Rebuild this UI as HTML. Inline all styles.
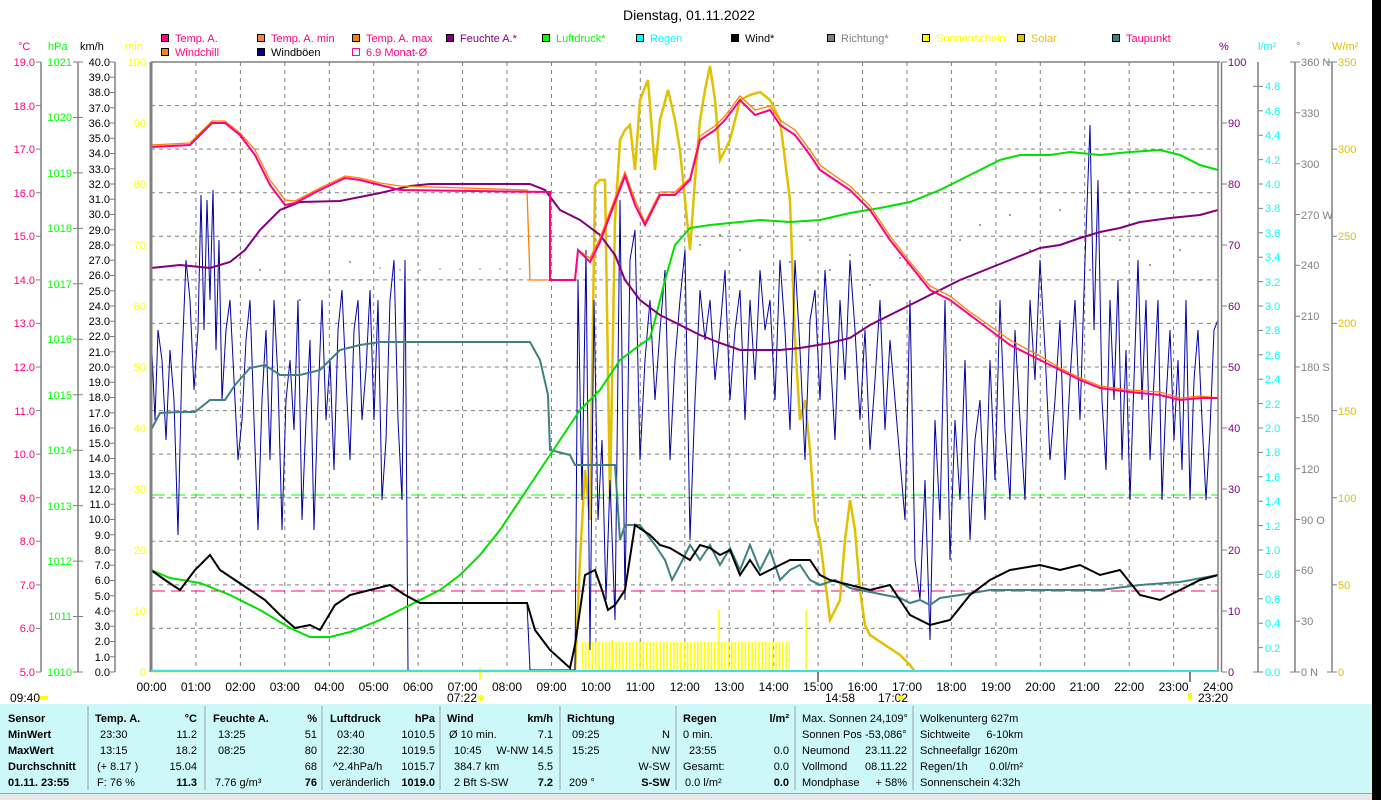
<!DOCTYPE html>
<html><head><meta charset="utf-8"><style>
html,body{margin:0;padding:0;background:#fff;width:1381px;height:800px;overflow:hidden}
svg{display:block;font-family:"Liberation Sans",sans-serif;font-size:11px}
</style></head><body>
<svg width="1381" height="800" viewBox="0 0 1381 800" xmlns="http://www.w3.org/2000/svg">
<defs>
<pattern id="sun" x="0" y="0" width="3.4" height="40" patternUnits="userSpaceOnUse"><rect x="0" y="0" width="1.6" height="40" fill="#ffff00"/></pattern>
</defs>
<rect width="1381" height="800" fill="#fff"/>
<rect x="1372" y="0" width="9" height="800" fill="#000"/>
<text x="689" y="20" text-anchor="middle" font-size="14">Dienstag, 01.11.2022</text>

<g font-size="11">
<rect x="161.5" y="34.5" width="7" height="7" fill="#ff0080" stroke="#000"/><text x="175" y="42" fill="#ff0080">Temp. A.</text>
<rect x="257.5" y="34.5" width="7" height="7" fill="#ff8040" stroke="#000"/><text x="271" y="42" fill="#ff0080">Temp. A. min</text>
<rect x="352.5" y="34.5" width="7" height="7" fill="#ff8000" stroke="#000"/><text x="366" y="42" fill="#ff0080">Temp. A. max</text>
<rect x="446.5" y="34.5" width="7" height="7" fill="#800080" stroke="#000"/><text x="460" y="42" fill="#800080">Feuchte A.*</text>
<rect x="542.5" y="34.5" width="7" height="7" fill="#00ff00" stroke="#000"/><text x="556" y="42" fill="#00ff00">Luftdruck*</text>
<rect x="636.5" y="34.5" width="7" height="7" fill="#00ffff" stroke="#000"/><text x="650" y="42" fill="#00ffff">Regen</text>
<rect x="731.5" y="34.5" width="7" height="7" fill="#000" stroke="#000"/><text x="745" y="42">Wind*</text>
<rect x="827.5" y="34.5" width="7" height="7" fill="#808080" stroke="#000"/><text x="841" y="42" fill="#808080">Richtung*</text>
<rect x="922.5" y="34.5" width="7" height="7" fill="#ffff00" stroke="#000"/><text x="936" y="42" fill="#ffff00">Sonnenschein</text>
<rect x="1017.5" y="34.5" width="7" height="7" fill="#e0c000" stroke="#000"/><text x="1031" y="42" fill="#e0c000">Solar</text>
<rect x="1112.5" y="34.5" width="7" height="7" fill="#408080" stroke="#000"/><text x="1126" y="42" fill="#ff0080">Taupunkt</text>
<rect x="161.5" y="48.5" width="7" height="7" fill="#ff8000" stroke="#000"/><text x="175" y="56" fill="#ff0080">Windchill</text>
<rect x="257.5" y="48.5" width="7" height="7" fill="#000080" stroke="#000"/><text x="271" y="56">Windböen</text>
<path d="M352.5 48.5h7v7" fill="none" stroke="#ff0080"/><path d="M352.5 48.5v7h7" fill="none" stroke="#ff0080"/><text x="366" y="56" fill="#ff0080">6.9 Monat-Ø</text>
</g>

<text x="18" y="50" fill="#ff0080">°C</text>
<text x="48" y="50" fill="#00ff00">hPa</text>
<text x="80" y="50">km/h</text>
<text x="125" y="50" fill="#ffff00">min</text>
<text x="1219" y="50" fill="#800080">%</text>
<text x="1258" y="50" fill="#00ffff">l/m²</text>
<text x="1296" y="50" fill="#808080">°</text>
<text x="1332" y="50" fill="#e0c000">W/m²</text>

<g stroke="#808080" stroke-width="1.5">
<line x1="41" y1="62" x2="41" y2="672"/>
<line x1="78" y1="62" x2="78" y2="672"/>
<line x1="115" y1="62" x2="115" y2="672"/>
<line x1="1258" y1="62" x2="1258" y2="672"/>
<line x1="1295" y1="62" x2="1295" y2="672"/>
<line x1="1332" y1="62" x2="1332" y2="672"/>
</g>
<g fill="#ff0080" text-anchor="end">
<text x="35" y="66">19.0</text><text x="35" y="110">18.0</text><text x="35" y="153">17.0</text><text x="35" y="197">16.0</text><text x="35" y="240">15.0</text><text x="35" y="284">14.0</text><text x="35" y="327">13.0</text><text x="35" y="371">12.0</text><text x="35" y="415">11.0</text><text x="35" y="458">10.0</text><text x="35" y="502">9.0</text><text x="35" y="545">8.0</text><text x="35" y="589">7.0</text><text x="35" y="632">6.0</text><text x="35" y="676">5.0</text>
</g>
<g stroke="#808080"><path d="M36 62h5M36 105.6h5M36 149.1h5M36 192.7h5M36 236.3h5M36 279.9h5M36 323.4h5M36 367h5M36 410.6h5M36 454.1h5M36 497.7h5M36 541.3h5M36 584.9h5M36 628.4h5M36 672h5"/>
<path d="M73 62h10M73 117.5h10M73 172.9h10M73 228.4h10M73 283.8h10M73 339.3h10M73 394.7h10M73 450.2h10M73 505.6h10M73 561.1h10M73 616.5h10M73 672h10"/>
<path d="M110 62h5M110 77.3h5M110 92.5h5M110 107.8h5M110 123h5M110 138.3h5M110 153.5h5M110 168.8h5M110 184h5M110 199.3h5M110 214.5h5M110 229.8h5M110 245h5M110 260.3h5M110 275.5h5M110 290.8h5M110 306h5M110 321.3h5M110 336.5h5M110 351.8h5M110 367h5M110 382.3h5M110 397.5h5M110 412.8h5M110 428h5M110 443.3h5M110 458.5h5M110 473.8h5M110 489h5M110 504.3h5M110 519.5h5M110 534.8h5M110 550h5M110 565.3h5M110 580.5h5M110 595.8h5M110 611h5M110 626.3h5M110 641.5h5M110 656.8h5M110 672h5"/>
<path d="M1222 62h5M1222 123h5M1222 184h5M1222 245h5M1222 306h5M1222 367h5M1222 428h5M1222 489h5M1222 550h5M1222 611h5M1222 672h5"/>
<path d="M1253 86.4h10M1258 110.8h5M1258 135.2h5M1258 159.6h5M1258 184h5M1258 208.4h5M1258 232.8h5M1258 257.2h5M1258 281.6h5M1258 306h5M1258 330.4h5M1258 354.8h5M1258 379.2h5M1258 403.6h5M1258 428h5M1258 452.4h5M1258 476.8h5M1258 501.2h5M1258 525.6h5M1258 550h5M1258 574.4h5M1258 598.8h5M1258 623.2h5M1258 647.6h5M1253 672h10"/>
<path d="M1290 62h10M1295 112.8h5M1295 163.7h5M1295 214.5h5M1295 265.3h5M1295 316.2h5M1295 367h5M1295 417.8h5M1295 468.7h5M1295 519.5h5M1295 570.3h5M1295 621.2h5M1290 672h10"/>
<path d="M1327 62h10M1332 149.1h5M1332 236.3h5M1332 323.4h5M1332 410.6h5M1332 497.7h5M1332 584.9h5M1327 672h10"/>
</g>
<g fill="#00ff00" text-anchor="end">
<text x="72" y="66">1021</text><text x="72" y="121">1020</text><text x="72" y="177">1019</text><text x="72" y="232">1018</text><text x="72" y="288">1017</text><text x="72" y="343">1016</text><text x="72" y="399">1015</text><text x="72" y="454">1014</text><text x="72" y="510">1013</text><text x="72" y="565">1012</text><text x="72" y="620">1011</text><text x="72" y="676">1010</text>
</g>
<g text-anchor="end">
<text x="110" y="66">40.0</text><text x="110" y="81">39.0</text><text x="110" y="96">38.0</text><text x="110" y="112">37.0</text><text x="110" y="127">36.0</text><text x="110" y="142">35.0</text><text x="110" y="157">34.0</text><text x="110" y="173">33.0</text><text x="110" y="188">32.0</text><text x="110" y="203">31.0</text><text x="110" y="218">30.0</text><text x="110" y="234">29.0</text><text x="110" y="249">28.0</text><text x="110" y="264">27.0</text><text x="110" y="279">26.0</text><text x="110" y="295">25.0</text><text x="110" y="310">24.0</text><text x="110" y="325">23.0</text><text x="110" y="340">22.0</text><text x="110" y="356">21.0</text><text x="110" y="371">20.0</text><text x="110" y="386">19.0</text><text x="110" y="401">18.0</text><text x="110" y="417">17.0</text><text x="110" y="432">16.0</text><text x="110" y="447">15.0</text><text x="110" y="462">14.0</text><text x="110" y="478">13.0</text><text x="110" y="493">12.0</text><text x="110" y="508">11.0</text><text x="110" y="523">10.0</text><text x="110" y="539">9.0</text><text x="110" y="554">8.0</text><text x="110" y="569">7.0</text><text x="110" y="584">6.0</text><text x="110" y="600">5.0</text><text x="110" y="615">4.0</text><text x="110" y="630">3.0</text><text x="110" y="645">2.0</text><text x="110" y="661">1.0</text><text x="110" y="676">0.0</text>
</g>
<g fill="#ffff00" text-anchor="end">
<text x="146" y="66">100</text><text x="146" y="127">90</text><text x="146" y="188">80</text><text x="146" y="249">70</text><text x="146" y="310">60</text><text x="146" y="371">50</text><text x="146" y="432">40</text><text x="146" y="493">30</text><text x="146" y="554">20</text><text x="146" y="615">10</text><text x="146" y="676">0</text>
</g>
<g fill="#800080">
<text x="1228" y="66">100</text><text x="1228" y="127">90</text><text x="1228" y="188">80</text><text x="1228" y="249">70</text><text x="1228" y="310">60</text><text x="1228" y="371">50</text><text x="1228" y="432">40</text><text x="1228" y="493">30</text><text x="1228" y="554">20</text><text x="1228" y="615">10</text><text x="1228" y="676">0</text>
</g>
<g fill="#00ffff">
<text x="1265" y="90">4.8</text><text x="1265" y="115">4.6</text><text x="1265" y="139">4.4</text><text x="1265" y="164">4.2</text><text x="1265" y="188">4.0</text><text x="1265" y="212">3.8</text><text x="1265" y="237">3.6</text><text x="1265" y="261">3.4</text><text x="1265" y="286">3.2</text><text x="1265" y="310">3.0</text><text x="1265" y="334">2.8</text><text x="1265" y="359">2.6</text><text x="1265" y="383">2.4</text><text x="1265" y="408">2.2</text><text x="1265" y="432">2.0</text><text x="1265" y="456">1.8</text><text x="1265" y="481">1.6</text><text x="1265" y="505">1.4</text><text x="1265" y="530">1.2</text><text x="1265" y="554">1.0</text><text x="1265" y="578">0.8</text><text x="1265" y="603">0.6</text><text x="1265" y="627">0.4</text><text x="1265" y="652">0.2</text><text x="1265" y="676">0.0</text>
</g>
<g fill="#808080">
<text x="1301" y="66">360 N</text><text x="1301" y="117">330</text><text x="1301" y="168">300</text><text x="1301" y="219">270 W</text><text x="1301" y="269">240</text><text x="1301" y="320">210</text><text x="1301" y="371">180 S</text><text x="1301" y="422">150</text><text x="1301" y="473">120</text><text x="1301" y="524">90  O</text><text x="1301" y="574">60</text><text x="1301" y="625">30</text><text x="1301" y="676">0   N</text>
</g>
<g fill="#e0c000">
<text x="1338" y="66">350</text><text x="1338" y="153">300</text><text x="1338" y="240">250</text><text x="1338" y="327">200</text><text x="1338" y="415">150</text><text x="1338" y="502">100</text><text x="1338" y="589">50</text><text x="1338" y="676">0</text>
</g>

<g stroke="#808080" stroke-dasharray="4,4" stroke-width="1">
<path d="M195.9 62V672M240.4 62V672M284.8 62V672M329.3 62V672M373.7 62V672M418.1 62V672M462.6 62V672M507 62V672M551.5 62V672M595.9 62V672M640.3 62V672M684.8 62V672M729.2 62V672M773.7 62V672M818.1 62V672M862.5 62V672M907 62V672M951.4 62V672M995.9 62V672M1040.3 62V672M1084.7 62V672M1129.2 62V672M1173.6 62V672"/>
<path d="M151 105.6H1218M151 149.1H1218M151 192.7H1218M151 236.3H1218M151 279.9H1218M151 323.4H1218M151 367H1218M151 410.6H1218M151 454.1H1218M151 497.7H1218M151 541.3H1218M151 584.9H1218M151 628.4H1218"/>
</g>
<line x1="151" y1="495" x2="1218" y2="495" stroke="#00ff00" stroke-dasharray="14,6"/>
<line x1="151" y1="591" x2="1218" y2="591" stroke="#ff0080" stroke-dasharray="14,6"/>

<g fill="#808080">
<circle cx="380" cy="268" r="0.8"/><circle cx="400" cy="270" r="0.8"/><circle cx="420" cy="270" r="0.8"/><circle cx="440" cy="269" r="0.8"/><circle cx="460" cy="269" r="0.8"/><circle cx="480" cy="269" r="0.8"/><circle cx="500" cy="269" r="0.8"/><circle cx="520" cy="269" r="0.8"/>
<circle cx="240" cy="258" r="1"/><circle cx="260" cy="270" r="1"/><circle cx="300" cy="300" r="1"/><circle cx="330" cy="290" r="1"/><circle cx="350" cy="262" r="1"/><circle cx="360" cy="280" r="1"/>
<circle cx="700" cy="245" r="1"/><circle cx="720" cy="235" r="1"/><circle cx="740" cy="250" r="1"/><circle cx="760" cy="238" r="1"/><circle cx="790" cy="262" r="1"/><circle cx="810" cy="240" r="1"/><circle cx="830" cy="270" r="1"/><circle cx="850" cy="255" r="1"/><circle cx="870" cy="285" r="1"/><circle cx="900" cy="258" r="1"/><circle cx="960" cy="240" r="1"/><circle cx="980" cy="225" r="1"/><circle cx="1010" cy="215" r="1"/><circle cx="1030" cy="250" r="1"/><circle cx="1060" cy="210" r="1"/><circle cx="1090" cy="270" r="1"/><circle cx="1120" cy="240" r="1"/><circle cx="1150" cy="265" r="1"/><circle cx="1180" cy="250" r="1"/><circle cx="1200" cy="280" r="1"/>
</g>
<rect x="582" y="642" width="208" height="30" fill="url(#sun)"/>
<path d="M719 610V672M806 610V672M612 640V672M480 668V680" stroke="#ffff00" stroke-width="1.6"/>

<polyline fill="none" stroke="#e0c000" stroke-width="2.5" points="151,671 575,671 580,560 585,470 590,520 595,185 600,180 605,180 610,500 615,220 620,140 625,130 630,125 635,170 640,100 648,80 655,170 660,120 668,90 675,120 680,150 690,250 695,180 700,120 705,90 710,66 715,100 720,160 730,140 740,100 750,95 760,92 770,100 780,120 790,200 795,340 800,420 805,400 810,450 815,520 820,540 830,620 840,600 845,540 850,500 855,530 860,590 865,625 870,635 885,645 900,655 910,665 915,672"/>
<polyline fill="none" stroke="#0000a0" stroke-width="1" points="151,330 155,420 158,330 162,360 166,440 170,350 174,400 178,535 182,360 186,260 190,300 194,390 198,330 201,195 204,330 207,200 210,300 213,190 216,350 219,240 222,400 226,330 230,300 234,380 238,460 242,420 246,340 250,300 254,420 258,530 262,400 266,330 270,460 274,300 278,380 282,530 286,400 290,360 294,430 298,300 302,520 306,420 310,340 314,530 318,400 322,300 326,420 330,360 334,470 338,330 342,290 346,380 350,460 354,330 358,300 362,420 366,370 370,290 374,420 378,300 382,500 386,440 390,300 394,260 398,420 402,500 405,260 408,670"/>
<polyline fill="none" stroke="#0000a0" stroke-width="1" points="527,603 530,670 575,670 578,280 582,500 586,250 590,650 594,300 598,520 602,440 606,600 610,480 615,620 620,200 625,600 630,260 635,230 640,460 645,360 650,300 655,400 660,330 665,270 670,460 675,360 680,300 685,250 690,540 695,400 700,290 705,340 710,300 715,380 720,330 725,270 730,400 735,330 740,290 745,420 750,300 755,380 760,270 765,330 770,300 775,400 780,260 785,330 790,430 795,260 800,350 805,460 810,320 815,290 820,400 825,270 830,350 835,440 840,300 845,380 850,260 855,330 860,420 865,330 870,450 875,380 880,300 885,430 890,340 895,400 900,460 905,520 910,300 915,560 920,600 925,480 930,640 935,420 940,520 945,300 950,560 955,420 960,500 965,360 970,540 975,440 980,400 985,520 990,360 995,480 1000,300 1005,430 1010,500 1015,330 1020,420 1025,500 1030,300 1035,380 1040,260 1045,350 1050,460 1055,400 1060,320 1065,480 1070,380 1075,300 1080,420 1085,260 1090,125 1094,330 1098,180 1102,400 1106,470 1110,300 1114,400 1118,280 1122,460 1126,350 1130,500 1134,380 1138,260 1142,400 1146,300 1150,460 1154,380 1158,300 1162,500 1166,400 1170,330 1174,440 1178,360 1182,470 1186,300 1190,500 1194,380 1198,330 1202,420 1206,500 1210,430 1214,330 1218,320"/>
<polyline fill="none" stroke="#408080" stroke-width="2" points="151,430 160,413 180,412 195,412 210,400 225,400 235,385 250,368 265,365 280,375 300,375 320,370 340,350 360,345 380,342 530,342 540,360 548,395 550,450 570,455 575,465 615,465 620,540 625,525 640,525 655,545 665,560 672,580 680,565 690,545 700,560 710,545 720,565 730,548 740,570 750,545 760,570 770,550 780,580 790,570 800,565 810,580 820,585 835,580 850,588 870,592 890,596 900,598 910,603 920,600 930,605 940,598 960,595 990,590 1020,590 1060,590 1100,590 1140,585 1180,582 1218,575"/>
<polyline fill="none" stroke="#00e000" stroke-width="2" points="151,570 170,578 200,583 230,595 260,610 290,628 310,637 330,637 350,632 380,620 410,605 440,590 460,575 480,555 500,530 520,500 540,470 560,440 580,410 600,390 620,360 640,345 650,338 655,320 665,280 675,245 690,228 710,225 740,222 760,220 790,222 820,220 850,213 880,208 910,202 940,190 960,180 980,170 1000,160 1020,155 1050,155 1070,152 1100,155 1130,152 1160,150 1180,155 1200,165 1218,170"/>
<polyline fill="none" stroke="#800080" stroke-width="2" points="151,268 180,265 210,268 230,262 245,250 260,230 280,210 300,202 340,201 380,193 410,186 430,184 530,184 545,190 560,210 580,220 600,235 615,255 625,280 640,300 660,315 680,325 700,335 720,343 740,350 760,350 780,350 800,348 830,343 850,338 870,325 890,315 910,305 940,290 960,280 990,268 1010,260 1040,248 1060,245 1080,238 1100,232 1120,228 1140,222 1170,218 1200,215 1218,210"/>
<polyline fill="none" stroke="#ff8000" stroke-width="1.3" points="151,145 190,143 200,133 212,121 225,121 240,133 255,150 270,180 285,200 295,201 320,188 345,176 360,178 380,183 400,186 527,190 530,280 575,280 578,250 590,258 600,238 615,198 625,172 635,200 645,222 660,192 675,192 690,178 700,136 715,126 725,116 740,96 755,110 770,106 780,120 795,130 810,150 820,165 835,176 850,186 870,206 890,236 910,262 930,286 950,296 970,312 990,326 1010,340 1040,356 1060,368 1080,378 1100,386 1130,390 1160,392 1180,398 1200,396 1218,398"/>
<polyline fill="none" stroke="#ff0080" stroke-width="2" points="151,147 190,145 200,135 212,123 225,123 240,135 255,155 270,185 285,205 295,203 320,190 345,178 360,180 380,185 400,190 550,192 550,280 575,280 578,250 590,262 600,242 615,202 625,176 635,205 645,225 660,195 675,195 690,180 700,140 715,130 725,120 740,100 755,115 770,110 780,125 795,135 810,155 820,170 835,180 850,190 870,210 890,240 910,265 930,290 950,300 970,315 990,330 1010,345 1040,360 1060,370 1080,380 1100,388 1130,392 1160,395 1180,400 1200,398 1218,398"/>
<polyline fill="none" stroke="#000" stroke-width="2" points="151,570 165,580 180,590 195,570 210,555 220,570 235,580 250,590 265,600 280,615 295,628 310,625 320,630 335,605 350,595 370,590 390,585 405,595 420,603 527,603 535,630 550,650 570,668 575,645 585,575 595,570 602,590 608,610 615,605 625,590 635,525 650,535 660,545 670,548 690,560 700,545 710,548 720,555 730,550 740,575 750,560 760,575 770,570 780,565 790,560 810,560 820,575 830,580 850,585 870,590 890,585 910,615 930,625 950,620 970,595 990,580 1010,570 1040,565 1060,570 1080,565 1100,575 1120,570 1140,595 1160,600 1180,590 1200,580 1218,575"/>

<line x1="151" y1="62" x2="151" y2="672" stroke="#808080" stroke-width="3"/>
<line x1="151" y1="62" x2="1220" y2="62" stroke="#808080" stroke-width="1.5"/>
<line x1="1218" y1="62" x2="1218" y2="672" stroke="#808080" stroke-width="1.5"/>
<line x1="1221.5" y1="62" x2="1221.5" y2="672" stroke="#808080" stroke-width="1.5"/>
<line x1="151" y1="671" x2="1218" y2="671" stroke="#40e0e0" stroke-width="2"/>
<path d="M818 672v10M1190 672v10" stroke="#808080" stroke-width="2"/>

<g text-anchor="middle" font-size="12">
<text x="151.5" y="691">00:00</text><text x="195.9" y="691">01:00</text><text x="240.4" y="691">02:00</text><text x="284.8" y="691">03:00</text><text x="329.3" y="691">04:00</text><text x="373.7" y="691">05:00</text><text x="418.1" y="691">06:00</text><text x="462.6" y="691">07:00</text><text x="507" y="691">08:00</text><text x="551.5" y="691">09:00</text><text x="595.9" y="691">10:00</text><text x="640.3" y="691">11:00</text><text x="684.8" y="691">12:00</text><text x="729.2" y="691">13:00</text><text x="773.7" y="691">14:00</text><text x="818.1" y="691">15:00</text><text x="862.5" y="691">16:00</text><text x="907" y="691">17:00</text><text x="951.4" y="691">18:00</text><text x="995.9" y="691">19:00</text><text x="1040.3" y="691">20:00</text><text x="1084.7" y="691">21:00</text><text x="1129.2" y="691">22:00</text><text x="1173.6" y="691">23:00</text><text x="1218" y="691">24:00</text>
</g>
<g font-size="12">
<text x="10" y="702">09:40</text><rect x="40" y="696" width="8" height="4" fill="#ffff00"/>
<text x="447" y="702">07:22</text><circle cx="481" cy="698" r="3" fill="#ffff00"/>
<text x="825" y="702">14:58</text><text x="878" y="702">17:02</text><rect x="898" y="696" width="5" height="4" fill="#ffff00"/>
<text x="1198" y="702">23:20</text><rect x="1188" y="693" width="4" height="6" fill="#ffff00"/>
</g>

<rect x="0" y="704" width="1372" height="89" fill="#ccf8f8"/>
<rect x="0" y="793" width="1372" height="7" fill="#e8e8e8"/>
<line x1="0" y1="793.5" x2="1372" y2="793.5" stroke="#a0a0a0"/>
<g stroke="#a0a0a0"><path d="M88 706V790M205 706V790M322 706V790M440 706V790M560 706V790M676 706V790M795 706V790M913 706V790"/></g>
<g font-size="11">
<g font-weight="bold"><text x="8" y="722">Sensor</text><text x="8" y="738">MinWert</text><text x="8" y="754">MaxWert</text><text x="8" y="770">Durchschnitt</text><text x="8" y="786">01.11. 23:55</text>
<text x="95" y="722">Temp. A.</text><text x="197" y="722" text-anchor="end">°C</text>
<text x="213" y="722">Feuchte A.</text><text x="317" y="722" text-anchor="end">%</text>
<text x="330" y="722">Luftdruck</text><text x="435" y="722" text-anchor="end">hPa</text>
<text x="447" y="722">Wind</text><text x="553" y="722" text-anchor="end">km/h</text>
<text x="567" y="722">Richtung</text>
<text x="683" y="722">Regen</text><text x="789" y="722" text-anchor="end">l/m²</text>
<text x="197" y="786" text-anchor="end">11.3</text><text x="317" y="786" text-anchor="end">76</text><text x="435" y="786" text-anchor="end">1019.0</text><text x="553" y="786" text-anchor="end">7.2</text><text x="670" y="786" text-anchor="end">S-SW</text><text x="789" y="786" text-anchor="end">0.0</text>
</g>
<text x="100" y="738">23:30</text><text x="197" y="738" text-anchor="end">11.2</text>
<text x="100" y="754">13:15</text><text x="197" y="754" text-anchor="end">18.2</text>
<text x="97" y="770">(+ 8.17 )</text><text x="197" y="770" text-anchor="end">15.04</text>
<text x="97" y="786">F: 76 %</text>
<text x="218" y="738">13:25</text><text x="317" y="738" text-anchor="end">51</text>
<text x="218" y="754">08:25</text><text x="317" y="754" text-anchor="end">80</text>
<text x="317" y="770" text-anchor="end">68</text>
<text x="215" y="786">7.76 g/m³</text>
<text x="337" y="738">03:40</text><text x="435" y="738" text-anchor="end">1010.5</text>
<text x="337" y="754">22:30</text><text x="435" y="754" text-anchor="end">1019.5</text>
<text x="333" y="770">^2.4hPa/h</text><text x="435" y="770" text-anchor="end">1015.7</text>
<text x="330" y="786">veränderlich</text>
<text x="449" y="738">Ø 10 min.</text><text x="553" y="738" text-anchor="end">7.1</text>
<text x="454" y="754">10:45</text><text x="553" y="754" text-anchor="end">W-NW 14.5</text>
<text x="454" y="770">384.7 km</text><text x="553" y="770" text-anchor="end">5.5</text>
<text x="454" y="786">2 Bft S-SW</text>
<text x="572" y="738">09:25</text><text x="670" y="738" text-anchor="end">N</text>
<text x="572" y="754">15:25</text><text x="670" y="754" text-anchor="end">NW</text>
<text x="670" y="770" text-anchor="end">W-SW</text>
<text x="569" y="786">209 °</text>
<text x="683" y="738">0 min.</text>
<text x="689" y="754">23:55</text><text x="789" y="754" text-anchor="end">0.0</text>
<text x="683" y="770">Gesamt:</text><text x="789" y="770" text-anchor="end">0.0</text>
<text x="685" y="786">0.0 l/m²</text>
<text x="802" y="722">Max. Sonnen 24,109°</text>
<text x="802" y="738">Sonnen Pos -53,086°</text>
<text x="802" y="754">Neumond</text><text x="907" y="754" text-anchor="end">23.11.22</text>
<text x="802" y="770">Vollmond</text><text x="907" y="770" text-anchor="end">08.11.22</text>
<text x="802" y="786">Mondphase</text><text x="907" y="786" text-anchor="end">+ 58%</text>
<text x="920" y="722">Wolkenunterg  627m</text>
<text x="920" y="738">Sichtweite</text><text x="1023" y="738" text-anchor="end">6-10km</text>
<text x="920" y="754">Schneefallgr  1620m</text>
<text x="920" y="770">Regen/1h</text><text x="1023" y="770" text-anchor="end">0.0l/m²</text>
<text x="920" y="786">Sonnenschein  4:32h</text>
</g>
</svg>
</body></html>
